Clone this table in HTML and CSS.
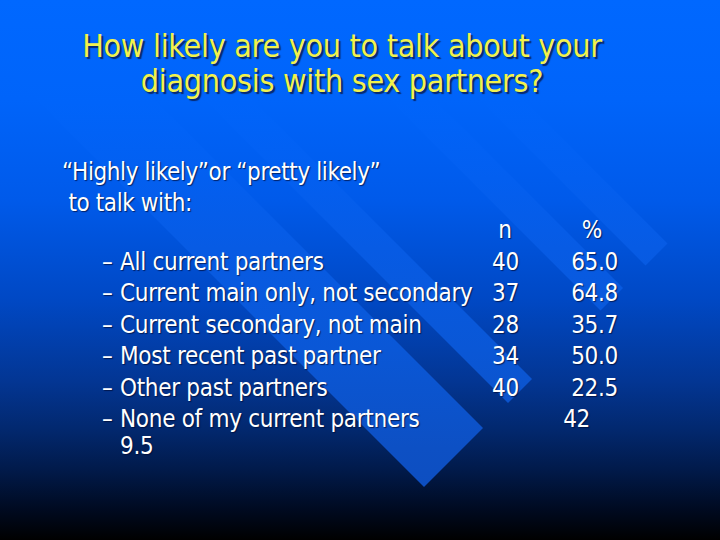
FILE: index.html
```html
<!DOCTYPE html>
<html lang="en">
<head>
    <meta charset="UTF-8">
    <meta name="viewport" content="width=device-width, initial-scale=1.0">
    <title>Talking about diagnosis</title>
    <link rel="stylesheet" href="styles.css">
</head>
<body>
    <div class="slide">
        <!-- diagonal light bands of the slide template -->
        <svg class="backdrop" viewBox="0 0 720 540" aria-hidden="true">
            <defs>
                <linearGradient id="band" gradientUnits="userSpaceOnUse" x1="0" y1="0" x2="0" y2="540">
                    <stop offset="0" stop-color="#0068ff"/>
                    <stop offset="0.19" stop-color="#0064fa"/>
                    <stop offset="0.33" stop-color="#035ff0"/>
                    <stop offset="0.46" stop-color="#075be4"/>
                    <stop offset="0.65" stop-color="#0a57d6"/>
                    <stop offset="0.83" stop-color="#0d50c4"/>
                    <stop offset="1" stop-color="#0d4cbc"/>
                </linearGradient>
            </defs>
            <polygon fill="url(#band)" points="-22.5,-77.5 483,428 424,487 -81.5,-18.5"/>
            <polygon fill="url(#band)" points="26.5,-126.5 532,379 508,403 2.5,-102.5"/>
            <polygon fill="url(#band)" points="117.5,-217.5 623,288 600.5,310.5 95,-195"/>
            <polygon fill="url(#band)" points="162,-262 667.5,243.5 645.5,265.5 140,-240"/>
        </svg>

        <h1 class="title">How likely are you to talk about your<br>diagnosis with sex partners?</h1>

        <div class="content">
            <p class="lead">&ldquo;Highly likely&rdquo;or &ldquo;pretty likely&rdquo;<br>&nbsp;to talk with:</p>

            <div class="table">
                <span></span><span></span><span class="n">n</span><span class="pct head">%</span>

                <span class="dash">&ndash;</span><span>All current partners</span><span class="n">40</span><span class="pct">65.0</span>
                <span class="dash">&ndash;</span><span>Current main only, not secondary</span><span class="n">37</span><span class="pct">64.8</span>
                <span class="dash">&ndash;</span><span>Current secondary, not main</span><span class="n">28</span><span class="pct">35.7</span>
                <span class="dash">&ndash;</span><span>Most recent past partner</span><span class="n">34</span><span class="pct">50.0</span>
                <span class="dash">&ndash;</span><span>Other past partners</span><span class="n">40</span><span class="pct">22.5</span>
                <span class="dash">&ndash;</span><span>None of my current partners<br>9.5</span><span class="n"></span><span class="pct odd">42</span>
            </div>
        </div>
    </div>
</body>
</html>
```

FILE: styles.css
```css
body {
    margin: 0;
    padding: 0;
    background-color: #000;
}

.slide {
    position: relative;
    width: 720px;
    height: 540px;
    overflow: hidden;
    font-family: "DejaVu Sans Condensed", "DejaVu Sans", sans-serif;
    color: #fff;
    background: linear-gradient(to bottom,
        #0068ff 0px,
        #0064fa 100px,
        #005aea 200px,
        #0048c4 300px,
        #033694 380px,
        #02286e 430px,
        #011a4a 470px,
        #000a20 510px,
        #000000 540px);
}

.backdrop {
    position: absolute;
    left: 0;
    top: 0;
    width: 720px;
    height: 540px;
}

.title {
    position: relative;
    margin: 0;
    padding: 29px 36px 0 0;
    font-size: 32px;
    font-weight: normal;
    line-height: 35px;
    letter-spacing: -0.3px;
    text-align: center;
    color: #f2f24c;
    text-shadow: 2px 2px 1px rgba(10, 20, 60, 0.75);
}

.content {
    position: relative;
    padding-left: 62px;
    text-shadow: 1px 1px 1px rgba(0, 10, 50, 0.7);
}

.lead {
    margin: 58px 0 0 0;
    font-size: 24px;
    line-height: 31px;
    letter-spacing: -0.4px;
}

.table {
    display: grid;
    grid-template-columns: 18px 372px 26px 100px;
    row-gap: 4.5px;
    margin-left: 40px;
    margin-top: -2px;
    font-size: 24px;
    line-height: 27px;
    letter-spacing: -0.3px;
}

.dash {
    letter-spacing: 0;
}

.n {
    text-align: center;
}

.pct {
    text-align: right;
}

.pct.head {
    padding-right: 16px;
}

.pct.odd {
    padding-right: 28px;
}
```
